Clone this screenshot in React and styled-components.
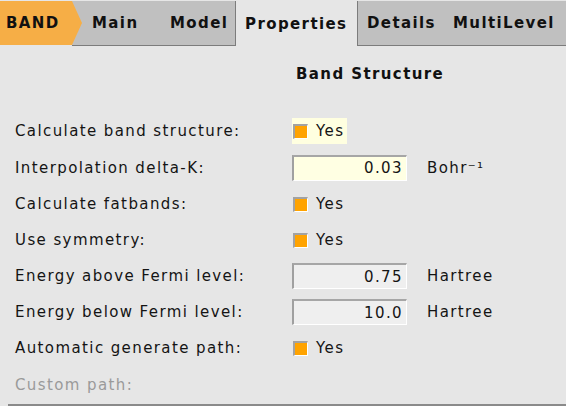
import React from "react";
import styled, { createGlobalStyle } from "styled-components";

const Global = createGlobalStyle`
  html, body { margin: 0; padding: 0; background: #e6e6e6; }
  body { font-family: "DejaVu Sans", Verdana, sans-serif; }
`;

const Page = styled.div`
  width: 566px;
  height: 406px;
  overflow: hidden;
  background: #e6e6e6;
  color: #141414;
  font-size: 15px;
  letter-spacing: 1.4px;
`;

const TabBar = styled.div`
  display: flex;
  height: 45px;
  margin-top: 1px;
  font-weight: bold;
`;

const BandTab = styled.div`
  position: relative;
  z-index: 1;
  box-sizing: border-box;
  width: 72px;
  height: 44px;
  padding-left: 6px;
  display: flex;
  align-items: center;
  background: #f6ae46;
  color: #111;
  &::after {
    content: "";
    position: absolute;
    left: 100%;
    top: 0;
    width: 10px;
    height: 100%;
    background: #f6ae46;
    clip-path: polygon(0 0, 100% 50%, 0 100%);
  }
`;

const Tab = styled.div`
  box-sizing: border-box;
  height: 45px;
  width: ${(p) => (p.$w ? `${p.$w}px` : "auto")};
  flex: ${(p) => (p.$w ? "none" : "1")};
  padding-left: ${(p) => p.$pl ?? 9}px;
  display: flex;
  align-items: center;
  background: #c0c0c0;
  border-bottom: 1px solid #7c7c7c;
  border-right: ${(p) => (p.$edge === "right" ? "1px solid #7c7c7c" : "none")};
  border-left: ${(p) => (p.$edge === "left" ? "1px solid #7c7c7c" : "none")};
  color: #111;
  white-space: nowrap;
`;

const ActiveTab = styled.div`
  box-sizing: border-box;
  width: 121px;
  height: 45px;
  padding-left: 9px;
  display: flex;
  align-items: center;
  background: #e6e6e6;
  color: #111;
`;

const Content = styled.div`
  padding: 15px 0 0 15px;
`;

const Heading = styled.div`
  height: 26px;
  line-height: 26px;
  padding-left: 281px;
  margin-bottom: 26px;
  font-weight: bold;
  color: #111;
  white-space: nowrap;
`;

const Row = styled.div`
  display: grid;
  grid-template-columns: 277px 135px auto;
  align-items: center;
  height: ${(p) => (p.$tall ? 37 : 36)}px;
`;

const Label = styled.div`
  color: ${(p) => (p.$disabled ? "#9a9a9a" : "#141414")};
  white-space: nowrap;
`;

const CheckField = styled.div`
  display: inline-flex;
  align-items: center;
  justify-self: start;
  gap: 8px;
  height: 26px;
  padding: 0 3px 0 1px;
  background: ${(p) => (p.$focused ? "#ffffe0" : "transparent")};
`;

const Box = styled.span`
  box-sizing: border-box;
  width: 15px;
  height: 15px;
  background: #ffa300;
  border-top: 2px solid #a2a2a2;
  border-left: 2px solid #a2a2a2;
  border-right: 1px solid #ffffff;
  border-bottom: 1px solid #ffffff;
`;

const NumberInput = styled.input`
  box-sizing: border-box;
  width: 115px;
  height: 26px;
  margin: 0;
  padding: 0 3px 0 4px;
  border-top: 2px solid #a6a6a6;
  border-left: 2px solid #a0a0a0;
  border-right: 1px solid #ffffff;
  border-bottom: 1px solid #ffffff;
  background: ${(p) => (p.$focused ? "#ffffe3" : "#efefef")};
  font-family: inherit;
  font-size: 15px;
  letter-spacing: 1.4px;
  color: #141414;
  text-align: right;
  outline: none;
`;

const Unit = styled.div`
  white-space: nowrap;
`;

const BottomRule = styled.div`
  margin: 1px 0 0 8px;
  height: 2px;
  background: #8a8a8a;
`;

const Check = ({ focused }) => (
  <CheckField $focused={focused}>
    <Box />
    <span>Yes</span>
  </CheckField>
);

const Num = ({ value, focused }) => (
  <NumberInput readOnly defaultValue={value} $focused={focused} />
);

export default function App() {
  return (
    <Page>
      <Global />
      <TabBar>
        <BandTab>BAND</BandTab>
        <Tab $w={81} $pl={20}>Main</Tab>
        <Tab $w={83} $pl={17} $edge="right">Model</Tab>
        <ActiveTab>Properties</ActiveTab>
        <Tab $w={87} $edge="left">Details</Tab>
        <Tab>MultiLevel</Tab>
      </TabBar>
      <Content>
        <Heading>Band Structure</Heading>
        <Row>
          <Label>Calculate band structure:</Label>
          <Check focused />
        </Row>
        <Row $tall>
          <Label>Interpolation delta-K:</Label>
          <Num value="0.03" focused />
          <Unit>Bohr⁻¹</Unit>
        </Row>
        <Row>
          <Label>Calculate fatbands:</Label>
          <Check />
        </Row>
        <Row>
          <Label>Use symmetry:</Label>
          <Check />
        </Row>
        <Row>
          <Label>Energy above Fermi level:</Label>
          <Num value="0.75" />
          <Unit>Hartree</Unit>
        </Row>
        <Row>
          <Label>Energy below Fermi level:</Label>
          <Num value="10.0" />
          <Unit>Hartree</Unit>
        </Row>
        <Row>
          <Label>Automatic generate path:</Label>
          <Check />
        </Row>
        <Row $tall>
          <Label $disabled>Custom path:</Label>
        </Row>
      </Content>
      <BottomRule />
    </Page>
  );
}
